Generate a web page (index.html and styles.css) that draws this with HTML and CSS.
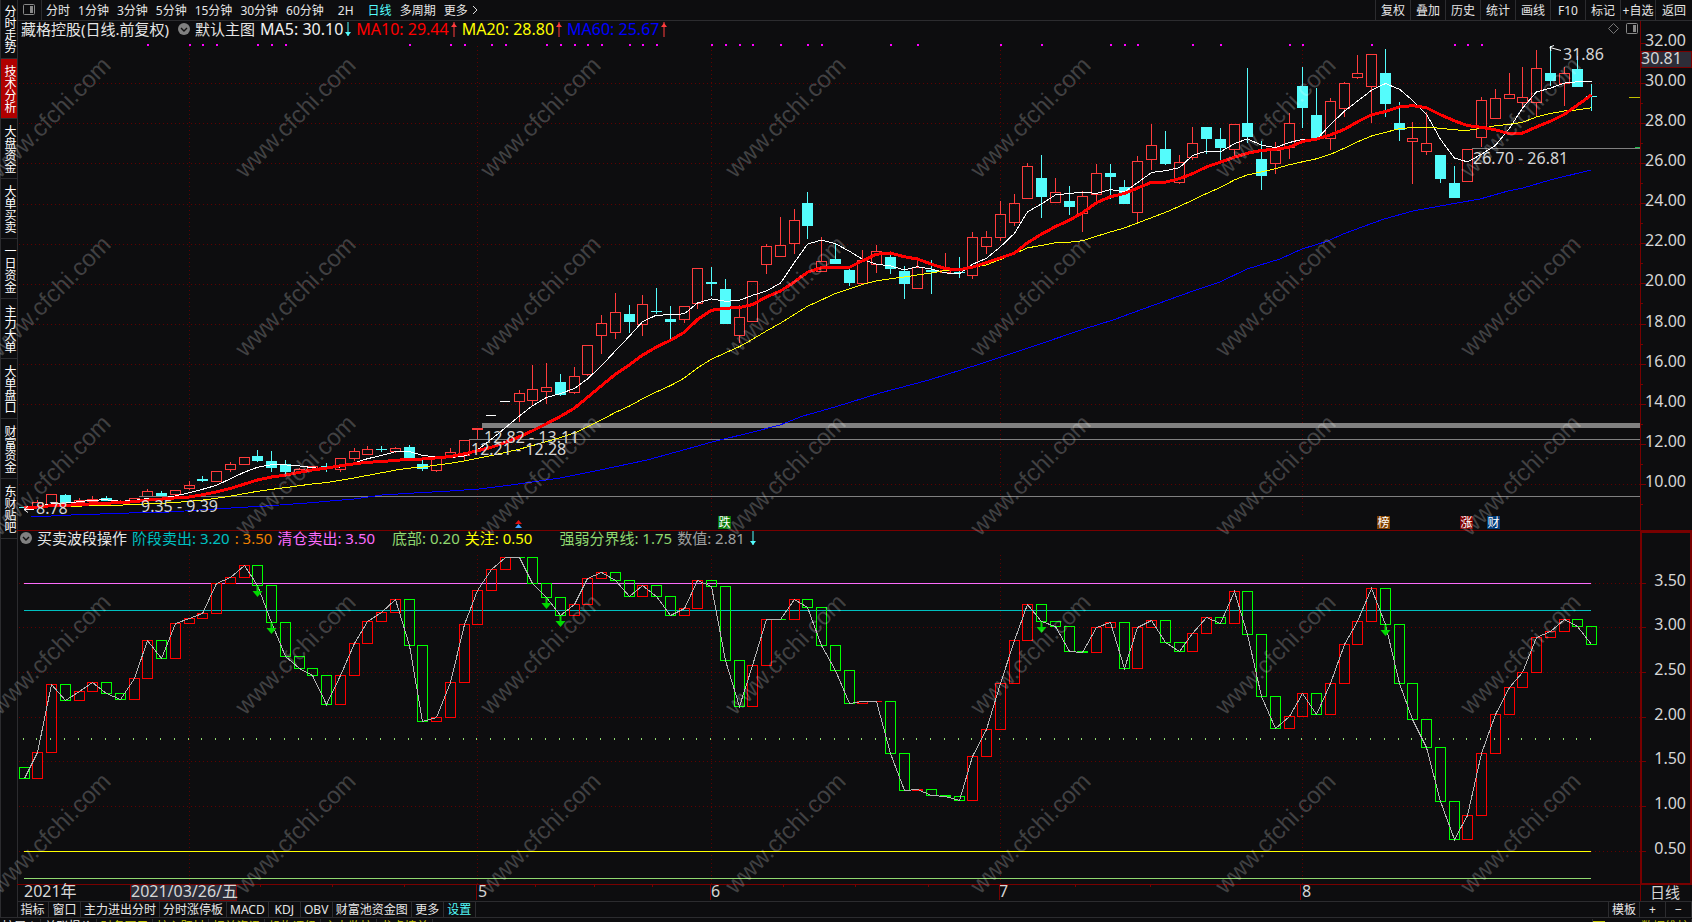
FILE: index.html
```html
<!DOCTYPE html>
<html lang="zh-CN">
<head>
<meta charset="utf-8">
<title>藏格控股 日线</title>
<link rel="stylesheet" href="styles.css">
</head>
<body>
<div class="app">
  <div class="workspace">
    <nav class="side">
      <button class="side-tab">分时走势</button>
      <button class="side-tab active">技术分析</button>
      <button class="side-tab">大盘资金</button>
      <button class="side-tab">大单买卖</button>
      <button class="side-tab">一日资金</button>
      <button class="side-tab">主力大单</button>
      <button class="side-tab">大单盘口</button>
      <button class="side-tab">财富资金</button>
      <button class="side-tab">东财贴吧</button>
    </nav>
    <main class="main">
      <header class="topbar">
        <button class="panel-toggle" aria-label="侧栏">
          <svg width="14" height="14" viewBox="0 0 14 14"><rect x="1.5" y="1.5" width="11" height="10" rx="1" fill="none" stroke="#888"/><rect x="8" y="3" width="3" height="7" fill="#888"/></svg>
        </button>
        <div class="periods">
          <button>分时</button><button>1分钟</button><button>3分钟</button><button>5分钟</button><button>15分钟</button><button>30分钟</button><button>60分钟</button><button class="wide">2H</button><button class="active">日线</button><button>多周期</button><button class="more">更多
            <svg width="6" height="10" viewBox="0 0 6 10"><path d="M1 1l4 4-4 4" fill="none" stroke="#ddd"/></svg></button>
        </div>
        <div class="tools">
          <button>复权</button><button>叠加</button><button>历史</button><button>统计</button><button>画线</button><button>F10</button><button>标记</button><button>+自选</button><button>返回</button>
        </div>
      </header>

      <section class="panel">
        <svg class="plot" id="price" viewBox="17 21 1675 509"></svg>
        <div class="legend legend-main">
          <span class="title">藏格控股(日线.前复权)</span>
          <button class="drop" aria-label="选择主图"><svg width="12" height="12" viewBox="0 0 12 12"><circle cx="6" cy="6" r="6" fill="#808080"/><path d="M3 5l3 3 3-3" fill="none" stroke="#111" stroke-width="1.4"/></svg></button>
          <span>默认主图</span>
          <span class="ma white">MA5: 30.10<svg width="6" height="15" viewBox="0 0 6 15"><path d="M3 0v14" stroke="#54fcfc"/><path d="M0 10h6l-3 4z" fill="#54fcfc"/></svg></span>
          <span class="ma red">MA10: 29.44<svg width="6" height="15" viewBox="0 0 6 15"><path d="M3 0v15" stroke="#ff3c3c"/><path d="M0 5h6L3 1z" fill="#ff3c3c"/></svg></span>
          <span class="ma yellow">MA20: 28.80<svg width="6" height="15" viewBox="0 0 6 15"><path d="M3 0v15" stroke="#ff3c3c"/><path d="M0 5h6L3 1z" fill="#ff3c3c"/></svg></span>
          <span class="ma blue">MA60: 25.67<svg width="6" height="15" viewBox="0 0 6 15"><path d="M3 0v15" stroke="#ff3c3c"/><path d="M0 5h6L3 1z" fill="#ff3c3c"/></svg></span>
          <span class="corner">
            <svg width="32" height="14" viewBox="0 0 32 14"><path d="M6.500 1.500l5 5-5 5-5-5z" fill="none" stroke="#777"/><rect x="19.500" y="1.500" width="11" height="10" rx="1" fill="none" stroke="#888"/><rect x="26" y="3" width="3" height="7" fill="#888"/></svg>
          </span>
        </div>
      </section>

      <section class="panel">
        <svg class="plot" id="wave" viewBox="17 530 1675 371"></svg>
        <div class="legend legend-wave">
          <button class="drop" aria-label="选择指标"><svg width="12" height="12" viewBox="0 0 12 12"><circle cx="6" cy="6" r="6" fill="#808080"/><path d="M3 5l3 3 3-3" fill="none" stroke="#111" stroke-width="1.4"/></svg></button>
          <span>买卖波段操作</span>
          <span class="teal">阶段卖出: 3.20</span>
          <span class="orange">: 3.50</span>
          <span class="pink">清仓卖出: 3.50</span>
          <span class="green spaced">底部: 0.20</span>
          <span class="yellow">关注: 0.50</span>
          <span class="green spaced-wide">强弱分界线: 1.75</span>
          <span class="grey">数值: 2.81</span>
          <svg width="6" height="15" viewBox="0 0 6 15"><path d="M3 0v14" stroke="#54fcfc"/><path d="M0 10h6l-3 4z" fill="#54fcfc"/></svg>
        </div>
      </section>

      <footer class="tabs">
        <button>指标</button><button>窗口</button><button>主力进出分时</button><button>分时涨停板</button><button>MACD</button><button>KDJ</button><button>OBV</button><button>财富池资金图</button><button>更多</button><button class="active">设置</button>
        <div class="zoomers"><button>模板</button><button>+</button><button>−</button></div>
      </footer>
    </main>
  </div>
  <div class="strip">
    <span class="first">扩展∧</span><span>关联报价</span><span class="olive">财务图示</span><span class="olive">核心题材</span><span class="olive">相关资讯</span><span class="olive">机构评级</span><span class="olive">主力监控</span><span class="olive">龙虎榜单</span>
    <span class="status olive"><i class="mark"></i>数据维护</span>
  </div>
  <svg class="watermark" id="watermark" aria-hidden="true"></svg>
</div>
<script src="chart.js"></script>
</body>
</html>
```
FILE: styles.css
```css
* { box-sizing: border-box; }
body {
  margin: 0;
  background: #0d0d0f;
  color: #e6e6e6;
  font-family: "Noto Sans", "Noto Sans CJK SC", sans-serif;
  font-size: 12px;
}
button {
  margin: 0;
  padding: 0;
  border: 0;
  background: none;
  color: inherit;
  font: inherit;
  white-space: nowrap;
}
.app {
  position: relative;
  height: 100vh;
  overflow: hidden;
  display: flex;
  flex-direction: column;
}
.workspace { display: flex; flex: none; }
.side {
  flex: none;
  width: 18px;
  margin-right: -1px;
  border: 1px solid #2c2c2f;
  border-top: 0;
  display: flex;
  flex-direction: column;
}
.side-tab {
  height: 60px;
  writing-mode: vertical-rl;
  text-orientation: upright;
  text-align: center;
  line-height: 14px;
  color: #fff;
  border-bottom: 1px solid #2c2c2f;
}
.side-tab.active { background: #b00000; }
.side-tab:first-child { height: 59px; }
.main { flex: 1; min-width: 0; display: flex; flex-direction: column; }

.topbar {
  height: 21px;
  border-bottom: 1px solid #2c2c2f;
  display: flex;
  line-height: 19px;
}
.panel-toggle {
  width: 25px;
  border-right: 1px solid #2c2c2f;
  display: flex;
  align-items: center;
  justify-content: center;
}
.periods { display: flex; gap: 8px; padding-left: 4px; flex: 1; }
.periods .wide { padding: 0 6px; }
.periods .active, .tabs .active { color: #54fcfc; }
.periods .more { display: flex; align-items: center; gap: 4px; }
.tools { display: flex; }
.tools button { width: 35px; border-left: 1px solid #2c2c2f; }
.tools button:last-child { width: 37px; }

.panel { display: grid; }
.panel > * { grid-area: 1 / 1; }
.plot { display: block; width: 100%; height: auto; }
.plot text {
  font-size: 16px;
  fill: #d6d6d6;
  dominant-baseline: central;
}
.plot .cjk { font-size: 15px; }
.plot .badge { font-size: 12px; fill: #fff; text-anchor: middle; }
.legend {
  align-self: start;
  display: flex;
  align-items: center;
  font-size: 15px;
  line-height: 16px;
  white-space: nowrap;
}
.drop { display: flex; }
.legend-main { padding-left: 4px; gap: 5px; }
.legend-main .title { margin-right: 4px; }
.ma { display: flex; align-items: center; gap: 2px; font-size: 16px; }
.corner { margin-left: auto; margin-right: 53px; display: flex; }
.legend-wave { padding-left: 3px; gap: 5px; }
.spaced { margin-left: 12px; }
.spaced-wide { margin-left: 22px; }
.white { color: #f2f2f2; }
.red { color: #f00; }
.yellow { color: #ff0; }
.blue { color: #00f; }
.teal { color: #00c0c0; }
.orange { color: #f08000; }
.pink { color: #fc6cfc; }
.green { color: #90d870; }
.grey { color: #a0a0a0; }

.tabs {
  display: flex;
  height: 17px;
  border-top: 1px solid #2c2c2f;
  border-bottom: 1px solid #2c2c2f;
  line-height: 13px;
}
.tabs button {
  min-width: 32px;
  padding: 0 3px;
  border-right: 1px solid #2c2c2f;
}
.zoomers { margin-left: auto; display: flex; border-left: 1px solid #2c2c2f; }
.zoomers button { min-width: 26px; }

.strip {
  display: flex;
  height: 20px;
  flex: none;
  margin-top: 1px;
  line-height: 16px;
}
.strip span { width: 56px; text-align: center; border-right: 1px solid #2c2c2f; }
.strip .first { width: 41px; }
.strip .olive { color: #c0c000; }
.strip .status {
  width: 100px;
  margin-left: auto;
  display: flex;
  gap: 36px;
  border-left: 1px solid #2c2c2f;
}
.mark { width: 12px; height: 12px; margin-top: 2px; background: #c0c000; flex: none; }

.watermark {
  position: absolute;
  inset: 0;
  width: 100%;
  height: 100%;
  pointer-events: none;
}
.watermark text {
  font-family: "Liberation Sans", sans-serif;
  font-size: 24px;
  fill: #fff;
  fill-opacity: 0.22;
}
```
FILE: chart.js
```js
// Candles: kind (r rising, c falling, w flat), high, top, bottom, low
const candles = `c507,507,507,507 r500,502,507,507 r494,494,504,504 c494,495,503,503 r498,500,502,502
r496,499,501,501 c496,498,501,501 r500,501,502,502 r498,498,500,500 r489,491,496,496 c491,493,497,497
r490,490,494,494 r481,485,488,490 c476,479,481,482 r471,471,481,481 r462,464,469,472 r457,457,464,465
c450,456,461,462 c451,461,468,472 c460,464,472,474 r468,469,472,473 r466,466,469,469 c463,466,467,472
r458,458,469,472 r448,451,458,461 r446,449,454,454 c446,449,450,452 r447,448,451,453 c445,447,458,458
c460,464,469,471 r458,458,470,472 r448,452,457,458 r440,440,455,460 r428,428,429,439 w415,415,415,415
w401,401,401,401 r390,393,401,422 r365,389,400,405 r363,387,391,404 c374,382,395,396 r367,376,392,394
r345,345,374,376 r315,323,335,354 r293,312,332,339 c305,314,322,333 r295,304,324,336 c288,311,312,314
c306,319,322,339 r306,306,319,323 r268,268,303,309 c267,282,284,296 c279,289,324,324 r305,317,335,343
r281,281,321,321 r244,246,264,274 r217,245,256,256 r209,220,243,254 c192,203,226,239 r237,261,271,271
c244,259,264,264 c267,270,283,286 r250,260,283,284 r245,251,264,273 c251,257,269,274 c266,271,284,299
r260,267,288,288 c260,270,272,294 r253,270,272,272 c257,272,273,278 r232,237,275,279 r231,237,246,254
r201,214,237,241 r194,203,222,226 r163,166,198,198 c155,178,197,218 r178,192,202,202 c186,201,207,215
r191,196,213,232 r164,173,194,201 c164,173,177,199 c180,187,204,204 r156,161,212,222 r124,145,159,170
c131,149,164,165 r155,162,182,184 r127,143,157,160 c127,127,139,154 c128,139,148,162 r124,124,149,156
c68,123,137,143 c141,159,176,190 r142,150,163,174 r113,123,147,159 c67,86,108,128 c88,115,138,138
r98,101,138,150 r82,83,108,117 r55,73,77,79 r54,54,86,123 c49,73,104,117 c102,123,130,141 r122,138,141,184
r112,143,151,155 c155,155,179,183 c166,183,198,198 r149,149,181,181 r97,100,137,147 r89,98,118,118
r73,94,98,98 r67,97,102,108 r50,68,102,117 c46,73,81,86 r67,73,83,106 c56,69,87,87 c84,96,97,111`
  .split(/\s+/).map(s => ({ kind: s[0], v: s.slice(1).split(',').map(Number) }));

const wave = [778,752,684,700,691,682,693,699,678,640,658,623,618,613,583,577,565,585,622,656,668,675,704,
675,643,621,612,599,645,721,717,682,624,590,569,557,557,583,597,615,604,578,572,580,596,585,596,615,608,580,
586,660,706,665,619,619,599,607,645,670,703,701,701,753,790,789,795,796,800,756,729,683,640,604,621,626,651,
652,627,622,668,627,620,642,651,633,617,623,591,634,696,728,716,693,714,683,644,621,588,624,683,719,747,801,
839,815,753,714,687,672,637,631,619,626,644];

const ma60 = '31,517 71,515 129,513 170,512 214,509 266,506 307,503 354,499 382,495 414,493 450,491 479,489 511,485 532,482 560,478 600,470 647,460 687,449 712,442 753,432 780,425 803,416 835,407 880,393 929,380 980,364 1034,346 1084,329 1113,320 1143,309 1193,291 1220,282 1247,269 1280,259 1302,249 1328,241 1343,234 1384,219 1413,211 1440,206 1480,199 1508,191 1523,188 1550,180 1591,170';
const signalDays = [9,12,13,14,17,18,19,28,31,32,34,35,38,39,40,41,42,44,45,46,50,51,52,53,55,57,58,63,65,71,74,79,80,81,85,87,92,93,98,104,105,106];
const monthDays = [12, 33, 50, 71, 93];
const sellDays = [17, 18, 38, 39, 74, 99];

const X = i => Math.floor(24 + 13.75 * i) + 0.5;
const line = (x1, y1, x2, y2, c, extra = '') => `<path d="M${x1} ${y1}L${x2} ${y2}" stroke="${c}" fill="none" ${extra}/>`;
const rect = (x, y, w, h, c) => `<rect x="${x}" y="${y}" width="${w}" height="${h}" fill="${c}"/>`;
const box = (x, y, w, h, c) => `<rect x="${x}" y="${y}" width="${w}" height="${h}" fill="none" stroke="${c}"/>`;
const text = (x, y, s, extra = '') => `<text x="${x}" y="${y}" ${extra}>${s}</text>`;
const poly = (pts, c, w = 1) => `<polyline points="${pts}" fill="none" stroke="${c}" stroke-width="${w}" shape-rendering="crispEdges"/>`;
const DARK = '#780000', GRID = '#600000', DOTS = 'stroke-dasharray="1 3"';

function average(n) {
  const close = candles.map(c => (c.kind === 'c' ? c.v[2] : c.v[1]));
  const all = Array(n - 1).fill(507).concat(close);
  return close.map((_, i) => `${X(i)},${(all.slice(i, i + n).reduce((a, b) => a + b, 0) / n + 0.5).toFixed(1)}`).join(' ');
}

function drawPrice() {
  let s = '';
  for (const y of [83, 123, 163, 204, 244, 284, 324, 364, 404, 444, 484]) s += line(19, y + 0.5, 1640, y + 0.5, GRID, DOTS);
  for (const i of monthDays) s += line(X(i), 46, X(i), 516, GRID, DOTS);
  for (const i of signalDays) s += rect(X(i) - 0.5, 44, 2, 2, '#f0f');
  candles.forEach(({ kind, v: [hi, top, bot, lo] }, i) => {
    const x = X(i);
    if (kind === 'w') { s += rect(x - 5.5, top, 10, 1, '#fff'); return; }
    const c = kind === 'r' ? '#ff3c3c' : '#54fcfc';
    if (hi < top) s += line(x, hi, x, top, c);
    if (lo > bot) s += line(x, bot, x, lo, c);
    s += kind === 'r' ? box(x - 5, top + 0.5, 10, Math.max(bot - top, 1), c)
      : rect(x - 5.5, top, 11, Math.max(bot - top, 1), c);
  });
  s += rect(482, 423, 1158, 5, '#808080');
  s += rect(469, 439, 1171, 1, '#808080') + rect(139, 496, 1501, 1, '#808080') + rect(1472, 148, 168, 1, '#808080');
  s += poly(average(5), '#fff') + poly(ma60, '#00f') + poly(average(20), '#ff0') + poly(average(10), '#f00', 3);
  s += text(36, 508, '8.78') + text(141, 506, '9.35 - 9.39') + text(484, 437, '12.82 - 13.11') + text(471, 449, '12.21 - 12.28');
  s += text(1473, 158, '26.70 - 26.81') + text(1563, 54, '31.86');
  s += '<path d="M34 509.500H24M28 506l-4 3.500 4 3M1561 50.500l-11-3M1554 45.500l-4 1.500 1 4" fill="none" stroke="#fff"/>';
  s += rect(1629, 97, 11, 1, '#c0c000') + rect(1635, 147, 5, 1, '#20c050');
  s += '<path d="M515 524l3.500-4 3.500 4z" fill="#e01010"/><path d="M515 528l3.500-4 3.500 4z" fill="#40a0ff"/>';
  for (const [x, ch, c] of [[718, '跌', '#087808'], [1377, '榜', '#804000'], [1460, '涨', '#800000'], [1487, '财', '#003c78']])
    s += rect(x, 516, 13, 13, c) + text(x + 6.5, 522, ch, 'class="badge"');
  s += line(1640.5, 21, 1640.5, 530, DARK);
  for (let p = 32; p >= 9; p--) {
    const y = Math.round(484 - (p - 10) * 20.06) + 0.5;
    s += line(1641, y, p % 2 ? 1643 : 1646, y, DARK);
    if (p % 2 === 0) s += text(1686, y - 3.5, p + '.00', 'text-anchor="end"');
  }
  s += `<rect x="1641.500" y="51.500" width="50" height="16" fill="#2d2d38" stroke="${DARK}"/>` + text(1641, 58, '30.81');
  document.getElementById('price').innerHTML = s;
}

function drawWave() {
  let s = line(17, 530.5, 1692, 530.5, DARK);
  for (const y of [583, 627, 672, 717, 761, 806, 851]) s += line(19, y + 0.5, 1640, y + 0.5, GRID, DOTS);
  for (const i of monthDays) s += line(X(i), 555, X(i), 884, GRID, DOTS);
  s += rect(24, 583, 1567, 1, '#fc6cfc') + rect(24, 610, 1567, 1, '#00c0c0') + rect(24, 851, 1567, 1, '#ff0') + rect(24, 878, 1567, 1, '#90d870');
  wave.forEach((y, i) => {
    const prev = i ? wave[i - 1] : 767;
    const up = y < prev || i === 62;
    s += rect(X(i) - 1.5, 738, 1, 2, '#90d870');
    s += box(X(i) - 5, Math.min(y, prev) + 0.5, 10, Math.abs(y - prev), up ? '#f00' : '#0f0');
    if (y === prev) s += rect(X(i) - 5.5, y, 11, 1, up ? '#f00' : '#0f0');
  });
  s += poly(wave.map((y, i) => `${X(i)},${y + 0.5}`).join(' '), '#b4b4b4');
  for (const i of sellDays) {
    const x = X(i), y = wave[i] + 1;
    s += rect(x - 1, y, 2, 6, '#00d800') + `<path d="M${x - 5} ${y + 5}h10l-5 6z" fill="#00d800"/>`;
  }
  s += line(17, 884.5, 1692, 884.5, DARK) + line(1640.5, 530, 1640.5, 901, DARK);
  s += `<rect x="1641" y="532" width="50" height="352" fill="none" stroke="${DARK}" stroke-width="2"/>`;
  [583, 627, 672, 717, 761, 806, 851].forEach((y, k) => {
    s += line(1642, y + 0.5, 1646, y + 0.5, DARK) + text(1686, y - 3, (3.5 - k / 2).toFixed(2), 'text-anchor="end"');
  });
  for (const [x, t] of [[24, '2021年'], [478, '5'], [711, '6'], [999, '7'], [1302, '8']]) s += text(x, 891, t);
  for (const x of [477.5, 711.5, 1000.5, 1301.5]) s += line(x - 1, 885, x - 1, 900, DARK);
  for (const x of [260.5, 332.5, 404.5, 535.5, 594.5, 652.5, 783.5, 855.5, 928.5, 1075.5, 1150.5, 1226.5]) s += line(x, 885, x, 887, DARK);
  s += `<rect x="130.500" y="884.500" width="106" height="16" fill="#2d2d38" stroke="${DARK}"/>` + text(131, 891, '2021/03/26/五');
  s += text(1650, 892, '日线', 'class="cjk"');
  document.getElementById('wave').innerHTML = s;
}

function drawWatermark() {
  let s = '';
  for (let y = 179; y < 1080; y += 179)
    for (let x = 0; x < 1600; x += 245) s += `<text transform="translate(${x} ${y}) rotate(-45)" x="0" y="0">www.cfchi.com</text>`;
  document.getElementById('watermark').innerHTML = s;
}

drawPrice();
drawWave();
drawWatermark();
```
